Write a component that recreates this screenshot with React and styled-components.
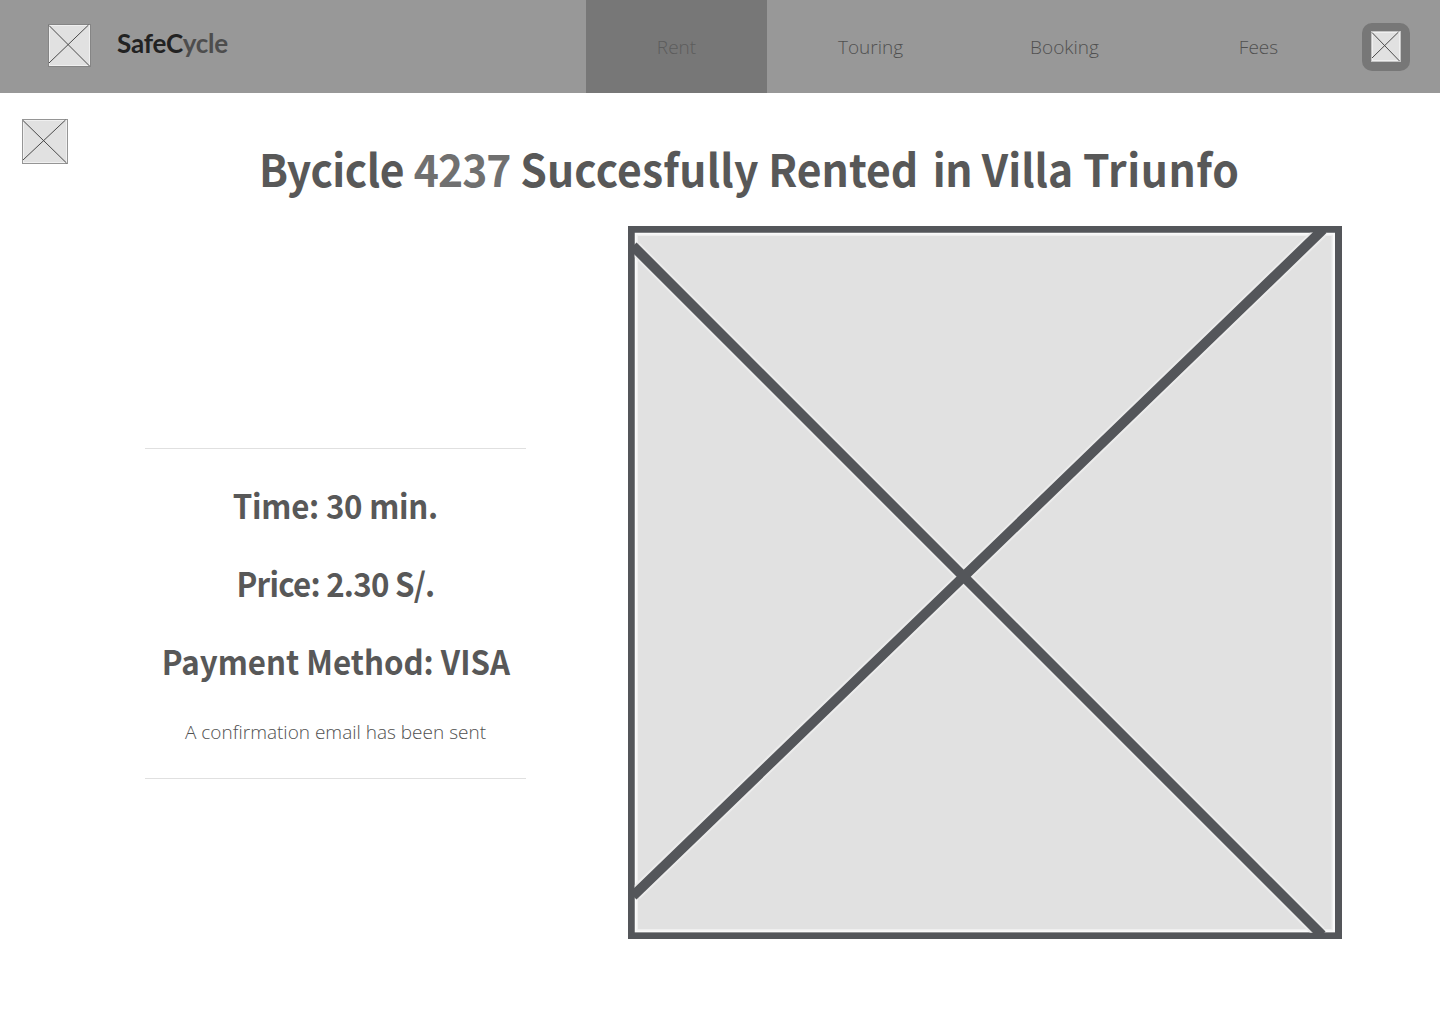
import React from 'react';
import styled, { createGlobalStyle } from 'styled-components';

const Global = createGlobalStyle`
  * { box-sizing: border-box; }
  body { margin: 0; background: #fff; }
`;

const heading = '"Noto Sans CJK SC", "Noto Sans", sans-serif';
const light = '"Open Sans", "Noto Sans", sans-serif';

const Page = styled.div`
  width: 1440px;
  height: 1024px;
  display: flex;
  flex-direction: column;
  overflow: hidden;
  background: #fff;
  color: #585858;
`;

const Header = styled.header`
  height: 93px;
  flex: none;
  display: flex;
  align-items: center;
  padding: 0 30px 0 48px;
  background: #989898;
`;

const Brand = styled.a`
  display: flex;
  align-items: center;
  gap: 26px;
  width: 538px;
  padding-bottom: 2px;
`;

const BrandName = styled.span`
  font: 700 26px/32px Lato, sans-serif;
  letter-spacing: -0.2px;
  padding-bottom: 5px;
  color: #4d4d4d;
`;

const BrandStrong = styled.span`
  color: #222;
`;

const Nav = styled.nav`
  display: flex;
  gap: 13px;
  height: 100%;
`;

const NavItem = styled.a`
  width: 181px;
  display: flex;
  align-items: center;
  justify-content: center;
  font: 300 19px/26px ${light};
  color: ${(p) => (p.$active ? '#5c5c5c' : '#505050')};
  background: ${(p) => (p.$active ? '#777' : 'transparent')};
`;

const Profile = styled.button`
  width: 48px;
  height: 48px;
  margin-left: auto;
  padding: 0;
  border: 0;
  border-radius: 10px;
  background: #777;
  display: flex;
  align-items: center;
  justify-content: center;
`;

const Main = styled.main`
  flex: 1;
  display: grid;
  grid-template-columns: 381px 714px;
  grid-template-rows: 133px 713px;
  column-gap: 102px;
  padding-left: 145px;
`;

const TitleBar = styled.div`
  grid-column: 1 / -1;
  display: flex;
  align-items: flex-start;
  margin-left: -145px;
  padding: 26px 0 0 22px;
`;

const Title = styled.h1`
  margin: 16px 0 0 191px;
  font: 700 45px/66px ${heading};
  white-space: nowrap;
  transform: scaleX(0.947);
  transform-origin: 0 50%;
`;

const Word = styled.span`
  letter-spacing: ${(p) => p.$track || 0}px;
  margin-right: ${(p) => p.$after || 0}px;
  color: ${(p) => (p.$muted ? '#707070' : 'inherit')};
`;

const Summary = styled.section`
  height: 331px;
  margin-top: 222px;
  padding-top: 31px;
  border-top: 1px solid #e0e0e0;
  border-bottom: 1px solid #e0e0e0;
  display: flex;
  flex-direction: column;
  align-items: center;
`;

const Detail = styled.p`
  margin: 0 0 28px;
  font: 700 33px/50px ${heading};
  letter-spacing: ${(p) => p.$track || 0}px;
  white-space: nowrap;
  transform: scaleX(0.947);
`;

const Note = styled.p`
  margin: 4px 0 0;
  font: 300 19px/28px ${light};
  color: #505050;
  white-space: nowrap;
`;

const Frame = styled.svg`
  flex: none;
  display: block;
`;

function Placeholder({ width, height, frame }) {
  const cx = width - 1.5;
  return (
    <Frame width={width} height={height} viewBox={`0 0 ${width} ${height}`} aria-hidden="true">
      <rect width={width} height={height} fill={frame} />
      <rect x="1" y="1" width={width - 2} height={height - 2} fill="#f0f0f0" />
      <rect x="2" y="2" width={width - 4} height={height - 4} fill="#e1e1e1" />
      <path d={`M1 1.5 L${cx} ${height - 1} M1 ${height - 4} L${cx - 1} 1`} fill="none" stroke="#4a4a4a" strokeWidth="1" />
    </Frame>
  );
}

function LargePlaceholder() {
  return (
    <Frame width="714" height="713" viewBox="0 0 714 713" aria-hidden="true">
      <rect width="714" height="713" fill="#54565a" />
      <rect x="6.5" y="6.5" width="700.5" height="700" fill="#fafafa" />
      <rect x="8.5" y="8.5" width="696.5" height="696" fill="#efefef" />
      <rect x="10" y="10" width="693.5" height="693" fill="#e1e1e1" />
      <g fill="none">
        <path d="M7 22 L692 707 M7 668 L693 5.5" stroke="#ececec" strokeWidth="14" />
        <path d="M5 20 L694 709 M5 670 L695 3.5" stroke="#54565a" strokeWidth="10" />
      </g>
      <path d="M3.25 0V713M710.5 0V713M0 3.25H714M0 710H714" stroke="#54565a" strokeWidth="6.5" />
    </Frame>
  );
}

export default function App() {
  return (
    <Page>
      <Global />
      <Header>
        <Brand>
          <Placeholder width={43} height={43} frame="#858585" />
          <BrandName><BrandStrong>SafeC</BrandStrong>ycle</BrandName>
        </Brand>
        <Nav>
          <NavItem $active>Rent</NavItem>
          <NavItem>Touring</NavItem>
          <NavItem>Booking</NavItem>
          <NavItem>Fees</NavItem>
        </Nav>
        <Profile aria-label="Profile">
          <Placeholder width={30} height={31} frame="#c4c4c4" />
        </Profile>
      </Header>
      <Main>
        <TitleBar>
          <Placeholder width={46} height={45} frame="#959595" />
          <Title>
            <Word $track={-0.5}>Bycicle</Word> <Word $muted $track={-1}>4237</Word>{' '}
            <Word $track={0.2}>Succesfully</Word> <Word $after={5}>Rented</Word> <Word $track={-0.4}>in</Word>{' '}
            <Word>Villa</Word> <Word $track={0.6}>Triunfo</Word>
          </Title>
        </TitleBar>
        <Summary>
          <Detail $track={-0.25}>Time: 30 min.</Detail>
          <Detail $track={-0.8}>Price: 2.30 S/.</Detail>
          <Detail>Payment Method: VISA</Detail>
          <Note>A confirmation email has been sent</Note>
        </Summary>
        <LargePlaceholder />
      </Main>
    </Page>
  );
}
